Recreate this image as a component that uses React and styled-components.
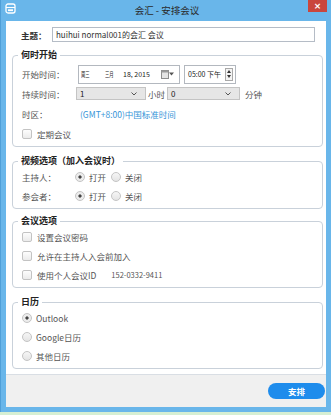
import React from "react";
import styled, { createGlobalStyle } from "styled-components";

const App = () => {
  return (
    <>
      <GlobalStyle />
      <Window>
        <TitleBar>
          <AppIcon />
          <Title>会汇 - 安排会议</Title>
          <CloseButton>×</CloseButton>
        </TitleBar>
        <Frame>
          <Content>
            <SubjectRow>
              <SubjectLabel>主题：</SubjectLabel>
              <TextInput readOnly value="huihui normal001的会汇 会议" />
            </SubjectRow>

            <Group $mt={7}>
              <Legend>何时开始</Legend>
              <Row $h={20} $first>
                <Label $w={56}>开始时间：</Label>
                <DateBox>
                  <NarrowCjk $gap={10}>
                    <span>周三</span>
                  </NarrowCjk>
                  <NarrowCjk $gap={4}>
                    <span>三月</span>
                  </NarrowCjk>
                  <span>18, 2015</span>
                  <CalendarButton>
                    <CalendarIcon />
                    <Caret />
                  </CalendarButton>
                </DateBox>
                <TimeBox>
                  <span>05:00 下午</span>
                  <Spinner>
                    <SpinArrow $up />
                    <SpinArrow />
                  </Spinner>
                </TimeBox>
              </Row>
              <Row $h={19}>
                <Label $w={54}>持续时间：</Label>
                <Select $w={70}>
                  <span>1</span>
                  <Chevron />
                </Select>
                <Unit>小时</Unit>
                <Select $w={73}>
                  <span>0</span>
                  <Chevron />
                </Select>
                <Unit $gap={5}>分钟</Unit>
              </Row>
              <Row $h={21}>
                <Label $w={56}>时区：</Label>
                <TimeZone>(GMT+8:00)中国标准时间</TimeZone>
              </Row>
              <Row $h={19}>
                <Checkbox />
                <OptionText>定期会议</OptionText>
              </Row>
            </Group>

            <Group $mt={8}>
              <Legend>视频选项（加入会议时）</Legend>
              <Row $h={19}>
                <Label $w={53}>主持人：</Label>
                <Radio $checked />
                <RadioText>打开</RadioText>
                <Radio />
                <RadioText>关闭</RadioText>
              </Row>
              <Row $h={19}>
                <Label $w={53}>参会者：</Label>
                <Radio $checked />
                <RadioText>打开</RadioText>
                <Radio />
                <RadioText>关闭</RadioText>
              </Row>
            </Group>

            <Group $mt={6}>
              <Legend>会议选项</Legend>
              <Row $h={19}>
                <Checkbox />
                <OptionText>设置会议密码</OptionText>
              </Row>
              <Row $h={19}>
                <Checkbox />
                <OptionText>允许在主持人入会前加入</OptionText>
              </Row>
              <Row $h={19}>
                <Checkbox />
                <OptionText>使用个人会议ID</OptionText>
                <MeetingId>152-0332-9411</MeetingId>
              </Row>
            </Group>

            <Group $mt={8}>
              <Legend>日历</Legend>
              <Row $h={19}>
                <Radio $checked />
                <OptionText>Outlook</OptionText>
              </Row>
              <Row $h={19}>
                <Radio />
                <OptionText>Google日历</OptionText>
              </Row>
              <Row $h={19}>
                <Radio />
                <OptionText>其他日历</OptionText>
              </Row>
            </Group>
          </Content>

          <Footer>
            <PrimaryButton>安排</PrimaryButton>
          </Footer>
        </Frame>
      </Window>
    </>
  );
};

// small drawings

const AppIcon = () => (
  <IconWrap>
    <svg width="11" height="11" viewBox="0 0 11 11">
      <rect x="1" y="1" width="9" height="9" rx="2" fill="none" stroke="#fff" strokeWidth="1.3" />
      <line x1="1" y1="4.5" x2="10" y2="4.5" stroke="#fff" strokeWidth="1.1" />
      <rect x="3" y="6.3" width="5" height="1.8" fill="#fff" />
    </svg>
  </IconWrap>
);

const CalendarIcon = () => (
  <svg width="8" height="9" viewBox="0 0 8 9">
    <rect x="0.5" y="0.5" width="7" height="8" fill="#e4e4e4" stroke="#8d8d8d" />
    <rect x="0.5" y="0.5" width="7" height="2" fill="#9a9a9a" />
  </svg>
);

const Caret = () => (
  <svg width="5" height="4" viewBox="0 0 5 4">
    <path d="M0 0.5 L5 0.5 L2.5 3.5 Z" fill="#555" />
  </svg>
);

const Chevron = () => (
  <ChevronWrap>
    <svg width="6" height="4" viewBox="0 0 6 4">
      <path d="M0.5 0.5 L3 3 L5.5 0.5" fill="none" stroke="#555" strokeWidth="1" />
    </svg>
  </ChevronWrap>
);

const SpinArrow = ({ $up }) => (
  <SpinCell>
    <svg width="4" height="3" viewBox="0 0 4 3">
      <path d={$up ? "M0 3 L4 3 L2 0 Z" : "M0 0 L4 0 L2 3 Z"} fill="#333" />
    </svg>
  </SpinCell>
);

// ----------------- Styled Components -----------------

const GlobalStyle = createGlobalStyle`
  html, body {
    margin: 0;
    padding: 0;
  }

  body {
    background: #d6efd3;
    font-family: "Noto Sans CJK SC", "Noto Sans", sans-serif;
    color: #333;
  }
`;

const Window = styled.div`
  width: 331px;
  height: 412px;
  box-sizing: border-box;
  background: #69b6ea;
  border-left: 1px solid #4f9fd8;
  display: flex;
  flex-direction: column;
`;

const TitleBar = styled.div`
  height: 21px;
  flex-shrink: 0;
  display: flex;
  align-items: flex-start;
`;

const IconWrap = styled.div`
  margin: 3px 0 0 4px;
  width: 11px;
  height: 11px;
  flex-shrink: 0;
  display: flex;
`;

const Title = styled.div`
  flex: 1;
  text-align: center;
  padding-left: 10px;
  font-size: 9.5px;
  line-height: 21px;
  color: #2a2a2a;
`;

const CloseButton = styled.span`
  display: block;
  flex: 0 0 19px;
  height: 12px;
  margin-right: 4px;
  background-color: #c9463d;
  color: #ffffff;
  font-family: "DejaVu Sans", sans-serif;
  font-size: 9px;
  font-weight: bold;
  line-height: 12px;
  text-align: center;
`;

const Frame = styled.div`
  flex: 1;
  min-height: 0;
  margin: 0 5px 5px 5px;
  background: #fff;
  display: flex;
  flex-direction: column;
`;

const Content = styled.div`
  padding: 6px 3px 0 6px;
  display: flex;
  flex-direction: column;
`;

const SubjectRow = styled.div`
  display: flex;
  align-items: center;
  height: 15px;
  padding-left: 9px;
  padding-right: 8px;
`;

const SubjectLabel = styled.span`
  width: 31px;
  font-size: 8.5px;
  font-weight: bold;
  color: #333;
`;

const TextInput = styled.input`
  flex: 1;
  min-width: 0;
  height: 15px;
  box-sizing: border-box;
  border: 1px solid #b5bcc6;
  padding: 0 3px;
  font-family: "Noto Sans CJK SC", "Noto Sans", sans-serif;
  font-size: 8px;
  color: #333;
  outline: none;
`;

const Group = styled.fieldset`
  margin: ${(p) => p.$mt}px 0 0;
  padding: 0 9px 3px;
  border: 1px solid #c9d1da;
  border-radius: 4px;
  min-width: 0;
`;

const Legend = styled.legend`
  margin-left: -4px;
  padding: 0 3px;
  font-size: 9px;
  font-weight: bold;
  line-height: 12px;
  color: #222;
`;

const Row = styled.div`
  display: flex;
  align-items: center;
  height: ${(p) => p.$h}px;
  margin-top: ${(p) => (p.$first ? 3 : 0)}px;
  font-size: 8.5px;
  white-space: nowrap;
`;

const Label = styled.span`
  width: ${(p) => p.$w}px;
  flex-shrink: 0;
  color: #555;
`;

const DateBox = styled.div`
  width: 102px;
  height: 19px;
  box-sizing: border-box;
  border: 1px solid #b3b8bf;
  display: flex;
  align-items: center;
  padding-left: 2px;
  font-size: 7px;
  color: #222;
  flex-shrink: 0;
`;

const NarrowCjk = styled.span`
  display: inline-block;
  flex: 0 0 9px;
  margin-right: ${(p) => p.$gap}px;
  font-size: 7px;

  & > span {
    display: inline-block;
    transform: scaleX(0.62);
    transform-origin: left center;
  }
`;

const CalendarButton = styled.div`
  margin-left: auto;
  margin-right: 5px;
  display: flex;
  align-items: center;
`;

const TimeBox = styled.div`
  width: 52px;
  height: 19px;
  margin-left: 4px;
  box-sizing: border-box;
  border: 1px solid #b3b8bf;
  display: flex;
  align-items: center;
  padding-left: 3px;
  font-size: 7px;
  color: #222;
  flex-shrink: 0;
`;

const Spinner = styled.div`
  margin-left: auto;
  margin-right: 2px;
  width: 8px;
  height: 13px;
  box-sizing: border-box;
  border: 1px solid #a9a9a9;
  background: #f4f4f4;
  display: flex;
  flex-direction: column;
`;

const SpinCell = styled.div`
  flex: 1;
  display: flex;
  align-items: center;
  justify-content: center;
`;

const Select = styled.div`
  width: ${(p) => p.$w}px;
  height: 13px;
  box-sizing: border-box;
  border: 1px solid #c4c4c4;
  background: #e6e6e6;
  display: flex;
  align-items: center;
  padding: 0 8px 0 3px;
  font-size: 8px;
  color: #222;
  flex-shrink: 0;
`;

const ChevronWrap = styled.div`
  margin-left: auto;
  display: flex;
`;

const Unit = styled.span`
  margin: 0 2px 0 ${(p) => p.$gap ?? 2}px;
  color: #555;
`;

const TimeZone = styled.span`
  margin-left: 2px;
  color: #3795d8;
`;

const Checkbox = styled.span`
  width: 10px;
  height: 10px;
  box-sizing: border-box;
  border: 1px solid #c3c3c3;
  border-radius: 2px;
  background: linear-gradient(#fdfdfd, #ebebeb);
  margin-right: 5px;
  flex-shrink: 0;
`;

const Radio = styled.span`
  width: 10px;
  height: 10px;
  box-sizing: border-box;
  border: 1px solid #c4c4c4;
  border-radius: 50%;
  background: ${(p) =>
    p.$checked
      ? "radial-gradient(circle, #444 0 1.3px, #ececec 1.9px)"
      : "linear-gradient(#f6f6f6, #e4e4e4)"};
  margin-right: 4px;
  flex-shrink: 0;
`;

const RadioText = styled.span`
  margin-right: 5px;
  color: #555;
`;

const OptionText = styled.span`
  color: #555;
`;

const MeetingId = styled.span`
  margin-left: 15px;
  font-size: 7.5px;
  color: #555;
`;

const Footer = styled.div`
  margin-top: auto;
  height: 33px;
  flex-shrink: 0;
  box-sizing: border-box;
  border-top: 1px solid #d9dee4;
  background: #f0f0f0;
  display: flex;
  align-items: center;
  justify-content: flex-end;
  padding-right: 1px;
`;

const PrimaryButton = styled.button`
  width: 57px;
  height: 16px;
  border: none;
  border-radius: 8px;
  background: #1e8cec;
  color: #fff;
  font-family: "Noto Sans CJK SC", sans-serif;
  font-size: 8.5px;
  font-weight: bold;
  padding: 0;
`;

// -------------- Export ----------------

export default App;
